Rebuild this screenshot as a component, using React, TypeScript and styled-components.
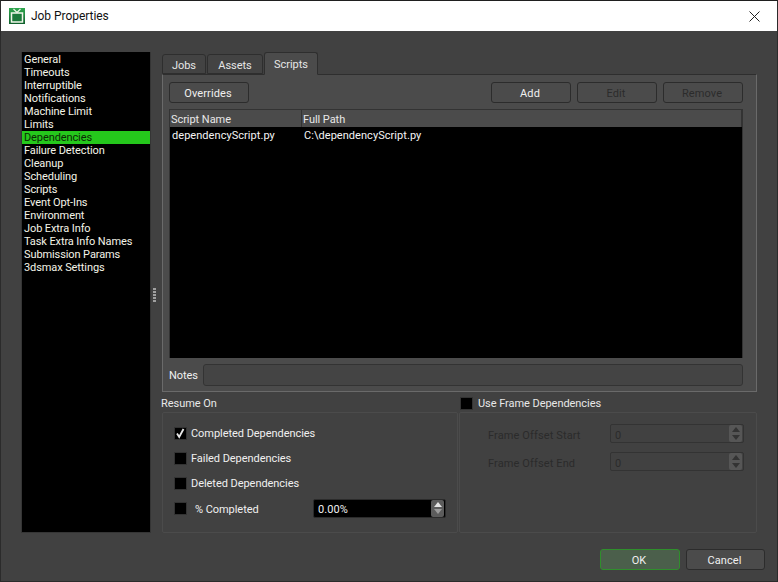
import React from 'react';
import styled, { createGlobalStyle } from 'styled-components';

const GlobalStyle = createGlobalStyle`
  html, body {
    margin: 0;
    padding: 0;
    background: #414141;
  }
  * {
    box-sizing: border-box;
  }
`;

const Window = styled.div`
  width: 778px;
  height: 582px;
  display: flex;
  flex-direction: column;
  background: #414141;
  border: 1px solid #2b2b2b;
  border-top-color: #1f1f1f;
  font-family: Roboto, 'Noto Sans', sans-serif;
  font-size: 11px;
  letter-spacing: -0.05px;
  color: #f0f0f0;
  overflow: hidden;
`;

const TitleBar = styled.div`
  height: 30px;
  flex: none;
  display: flex;
  align-items: center;
  background: #ffffff;
  color: #111;
  font-size: 12px;
  padding-left: 8px;
`;

const TitleText = styled.span`
  margin-left: 6px;
  flex: 1;
`;

const CloseBox = styled.div`
  width: 46px;
  height: 30px;
  display: flex;
  align-items: center;
  justify-content: center;
`;

const Main = styled.div`
  flex: 1;
  display: flex;
  padding: 21px 20px 0 20px;
  min-height: 0;
`;

const NavList = styled.ul`
  width: 130px;
  height: 481px;
  flex: none;
  list-style: none;
  margin: 0;
  padding: 1px 0 0;
  background: #000;
  border: 1px solid #353535;
  border-width: 0 1px 1px 1px;
`;

const NavItem = styled.li<{ $active?: boolean }>`
  height: 13px;
  line-height: 13px;
  padding-left: 2px;
  letter-spacing: -0.1px;
  white-space: nowrap;
  color: ${(p) => (p.$active ? '#0c2a05' : '#f4f4e8')};
  background: ${(p) => (p.$active ? '#25c81c' : 'transparent')};
`;

const Splitter = styled.div`
  width: 11px;
  height: 481px;
  flex: none;
  display: flex;
  align-items: center;
  padding-left: 2px;
`;

const Grip = styled.div`
  width: 3px;
  height: 15px;
  margin-top: 6px;
  background: repeating-linear-gradient(to bottom, #a0a0a0 0 2px, #414141 2px 3px);
`;

const RightColumn = styled.div`
  width: 595px;
  flex: none;
  display: flex;
  flex-direction: column;
`;

const TabRow = styled.div`
  height: 22px;
  display: flex;
  align-items: flex-end;
  gap: 1px;
  position: relative;
  z-index: 1;
`;

const Tab = styled.div<{ $active?: boolean; $width: number }>`
  height: ${(p) => (p.$active ? '23px' : '20px')};
  width: ${(p) => p.$width}px;
  margin-bottom: ${(p) => (p.$active ? '-1px' : '0')};
  padding-top: ${(p) => (p.$active ? '1px' : '2px')};
  display: flex;
  align-items: center;
  justify-content: center;
  background: ${(p) => (p.$active ? '#4b4b4b' : '#434343')};
  border: 1px solid #2e2e2e;
  border-bottom-color: ${(p) => (p.$active ? '#4b4b4b' : '#2e2e2e')};
  border-radius: 3px 3px 0 0;
  color: #e6e6e6;
`;

const Pane = styled.div`
  height: 318px;
  flex: none;
  display: flex;
  flex-direction: column;
  background: #4b4b4b;
  border: 1px solid #6a6a6a;
  border-top-color: #2e2e2e;
  padding: 7px 13px 0 6px;
`;

const Toolbar = styled.div`
  display: flex;
  height: 22px;
  gap: 6px;
`;

const Spacer = styled.div`
  flex: 1;
`;

const Button = styled.div<{ $disabled?: boolean; $primary?: boolean; $width?: number }>`
  width: ${(p) => p.$width ?? 80}px;
  height: 21px;
  padding: 1px 2px 0 0;
  display: flex;
  align-items: center;
  justify-content: center;
  letter-spacing: 0.1px;
  border-radius: 3px;
  border: 1px solid ${(p) => (p.$primary ? '#2f8f2c' : '#2c2c2c')};
  background: ${(p) => (p.$primary ? '#4b5f4b' : '#4b4b4b')};
  color: ${(p) => (p.$disabled ? '#2b2b2b' : '#f0f0f0')};
`;

const Table = styled.div`
  margin-top: 5px;
  height: 249px;
  display: flex;
  flex-direction: column;
  border: 1px solid #333;
  border-bottom: 0;
`;

const TableHead = styled.div`
  height: 17px;
  flex: none;
  display: flex;
  background: #4b4b4b;
`;

const HeadCell = styled.div<{ $width?: number }>`
  ${(p) => (p.$width ? `width: ${p.$width}px;` : 'flex: 1;')}
  padding-left: 1px;
  line-height: 19px;
  border-right: 1px solid #333;
  color: #e8e8e8;
`;

const TableBody = styled.div`
  flex: 1;
  background: #000;
`;

const TableRow = styled.div`
  display: flex;
  height: 16px;
  line-height: 17px;
  letter-spacing: 0.05px;
  color: #f4f4f4;
`;

const BodyCell = styled.div<{ $width?: number }>`
  ${(p) => (p.$width ? `width: ${p.$width}px;` : 'flex: 1;')}
  padding-left: 2px;
`;

const NotesRow = styled.div`
  margin-top: 6px;
  height: 22px;
  display: flex;
  align-items: center;
  gap: 5px;
`;

const NotesLabel = styled.span`
  padding-top: 1px;
`;

const NotesField = styled.div`
  flex: 1;
  height: 22px;
  border: 1px solid #333;
  border-radius: 3px;
  background: #444;
`;

const Columns = styled.div`
  display: grid;
  grid-template-columns: 296px 298px;
  gap: 1px;
  margin-top: 2px;
`;

const GroupColumn = styled.div`
  display: flex;
  flex-direction: column;
`;

const GroupTitle = styled.div`
  height: 18px;
  display: flex;
  align-items: center;
  color: #e8e8e8;
`;

const ResumeTitle = styled(GroupTitle)`
  margin-left: -1px;
`;

const FrameTitle = styled(GroupTitle)`
  padding-left: 1px;
  gap: 5px;
`;

const GroupBox = styled.div`
  height: 121px;
  border: 1px solid #4b4b4b;
  border-radius: 2px;
  display: flex;
  flex-direction: column;
`;

const CheckList = styled(GroupBox)`
  padding: 13px 0 0 11px;
`;

const CheckRow = styled.div`
  display: flex;
  align-items: center;
  height: 14px;
  margin-bottom: 11px;
  gap: 4px;
`;

const Check = styled.div`
  width: 13px;
  height: 13px;
  flex: none;
  background: #000;
  border: 1px solid #333;
  display: flex;
  align-items: center;
  justify-content: center;
`;

const PercentLabel = styled.span`
  margin-left: 4px;
  width: 114px;
  padding-top: 2px;
`;

const SpinBox = styled.div<{ $disabled?: boolean; $width: number }>`
  width: ${(p) => p.$width}px;
  height: 19px;
  display: flex;
  align-items: center;
  padding: 0 1px 0 4px;
  border-radius: 2px;
  border: 1px solid ${(p) => (p.$disabled ? '#333' : '#2b2b2b')};
  background: ${(p) => (p.$disabled ? '#414141' : '#000')};
  color: ${(p) => (p.$disabled ? '#2b2b2b' : '#f0f0f0')};
`;

const SpinValue = styled.span`
  flex: 1;
  padding-top: 3px;
  letter-spacing: 0.1px;
`;

const SpinButtons = styled.div<{ $disabled?: boolean }>`
  width: 13px;
  height: 17px;
  flex: none;
  display: flex;
  flex-direction: column;
  align-items: center;
  justify-content: space-evenly;
  border-radius: 2px;
  background: ${(p) => (p.$disabled ? '#565656' : '#5c5c5c')};
`;

const Arrow = styled.div<{ $down?: boolean; $disabled?: boolean }>`
  width: 0;
  height: 0;
  border-left: 4px solid transparent;
  border-right: 4px solid transparent;
  ${(p) => (p.$down ? 'border-top' : 'border-bottom')}: 5px solid ${(p) =>
    p.$disabled ? '#333' : p.$down ? '#9a9a9a' : '#e4e4e4'};
`;

const OffsetList = styled(GroupBox)`
  padding: 11px 0 0 28px;
  gap: 9px;
`;

const OffsetRow = styled.div`
  display: flex;
  align-items: center;
  height: 19px;
  color: #2b2b2b;
`;

const OffsetLabel = styled.span`
  width: 122px;
  padding-top: 3px;
  letter-spacing: 0.12px;
`;

const Footer = styled.div`
  height: 48px;
  flex: none;
  display: flex;
  justify-content: flex-end;
  gap: 6px;
  padding: 16px 12px 0 0;
`;

const navItems = [
  'General',
  'Timeouts',
  'Interruptible',
  'Notifications',
  'Machine Limit',
  'Limits',
  'Dependencies',
  'Failure Detection',
  'Cleanup',
  'Scheduling',
  'Scripts',
  'Event Opt-Ins',
  'Environment',
  'Job Extra Info',
  'Task Extra Info Names',
  'Submission Params',
  '3dsmax Settings',
];

const AppIcon = () => (
  <svg width="16" height="16" viewBox="0 0 16 16">
    <defs>
      <linearGradient id="iconBg" x1="0" y1="0" x2="0" y2="1">
        <stop offset="0" stopColor="#2fa84f" />
        <stop offset="1" stopColor="#0f5f2c" />
      </linearGradient>
    </defs>
    <rect width="16" height="16" fill="url(#iconBg)" />
    <path d="M4.5 1l3.5 3.5L11.5 1" stroke="#f2f7ea" strokeWidth="1.2" fill="none" />
    <rect x="2.5" y="5" width="11" height="9" fill="#1d7a3c" stroke="#f2f7ea" strokeWidth="1.5" />
  </svg>
);

const CloseIcon = () => (
  <svg width="11" height="11" viewBox="0 0 11 11">
    <path d="M0.5 0.5l10 10M10.5 0.5l-10 10" stroke="#222" strokeWidth="1" fill="none" />
  </svg>
);

const CheckMark = () => (
  <svg width="11" height="11" viewBox="0 0 11 11">
    <path d="M2 5.5l2.2 3.5L8.5 1" stroke="#e8e8e8" strokeWidth="1.8" fill="none" />
  </svg>
);

const Spinner = ({ value, width, disabled }: { value: string; width: number; disabled?: boolean }) => (
  <SpinBox $width={width} $disabled={disabled}>
    <SpinValue>{value}</SpinValue>
    <SpinButtons $disabled={disabled}>
      <Arrow $disabled={disabled} />
      <Arrow $down $disabled={disabled} />
    </SpinButtons>
  </SpinBox>
);

const App: React.FC = () => {
  return (
    <Window>
      <GlobalStyle />
      <TitleBar>
        <AppIcon />
        <TitleText>Job Properties</TitleText>
        <CloseBox>
          <CloseIcon />
        </CloseBox>
      </TitleBar>
      <Main>
        <NavList>
          {navItems.map((item) => (
            <NavItem key={item} $active={item === 'Dependencies'}>
              {item}
            </NavItem>
          ))}
        </NavList>
        <Splitter>
          <Grip />
        </Splitter>
        <RightColumn>
          <TabRow>
            <Tab $width={44}>Jobs</Tab>
            <Tab $width={56}>Assets</Tab>
            <Tab $active $width={54}>
              Scripts
            </Tab>
          </TabRow>
          <Pane>
            <Toolbar>
              <Button $width={80}>Overrides</Button>
              <Spacer />
              <Button $width={80}>Add</Button>
              <Button $width={80} $disabled>
                Edit
              </Button>
              <Button $width={80} $disabled>
                Remove
              </Button>
            </Toolbar>
            <Table>
              <TableHead>
                <HeadCell $width={132}>Script Name</HeadCell>
                <HeadCell>Full Path</HeadCell>
              </TableHead>
              <TableBody>
                <TableRow>
                  <BodyCell $width={132}>dependencyScript.py</BodyCell>
                  <BodyCell>C:\dependencyScript.py</BodyCell>
                </TableRow>
              </TableBody>
            </Table>
            <NotesRow>
              <NotesLabel>Notes</NotesLabel>
              <NotesField />
            </NotesRow>
          </Pane>
          <Columns>
            <GroupColumn>
              <ResumeTitle>Resume On</ResumeTitle>
              <CheckList>
                <CheckRow>
                  <Check>
                    <CheckMark />
                  </Check>
                  <span>Completed Dependencies</span>
                </CheckRow>
                <CheckRow>
                  <Check />
                  <span>Failed Dependencies</span>
                </CheckRow>
                <CheckRow>
                  <Check />
                  <span>Deleted Dependencies</span>
                </CheckRow>
                <CheckRow>
                  <Check />
                  <PercentLabel>% Completed</PercentLabel>
                  <Spinner value="0.00%" width={133} />
                </CheckRow>
              </CheckList>
            </GroupColumn>
            <GroupColumn>
              <FrameTitle>
                <Check />
                <span>Use Frame Dependencies</span>
              </FrameTitle>
              <OffsetList>
                <OffsetRow>
                  <OffsetLabel>Frame Offset Start</OffsetLabel>
                  <Spinner value="0" width={134} disabled />
                </OffsetRow>
                <OffsetRow>
                  <OffsetLabel>Frame Offset End</OffsetLabel>
                  <Spinner value="0" width={134} disabled />
                </OffsetRow>
              </OffsetList>
            </GroupColumn>
          </Columns>
        </RightColumn>
      </Main>
      <Footer>
        <Button $primary $width={80}>
          OK
        </Button>
        <Button $width={79}>Cancel</Button>
      </Footer>
    </Window>
  );
};

export default App;
